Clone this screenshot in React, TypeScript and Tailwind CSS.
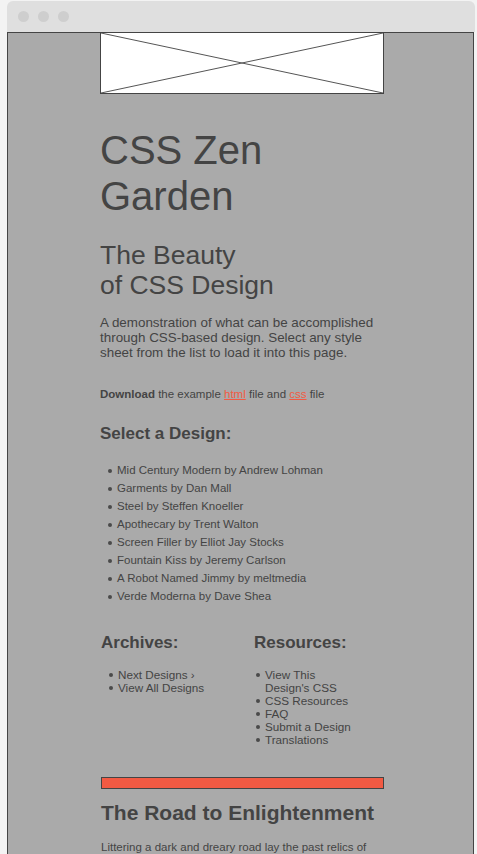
const DESIGNS = [
  "Mid Century Modern by Andrew Lohman",
  "Garments by Dan Mall",
  "Steel by Steffen Knoeller",
  "Apothecary by Trent Walton",
  "Screen Filler by Elliot Jay Stocks",
  "Fountain Kiss by Jeremy Carlson",
  "A Robot Named Jimmy by meltmedia",
  "Verde Moderna by Dave Shea",
];

const ARCHIVES = ["Next Designs ›", "View All Designs"];
const RESOURCES = [
  "View This Design's CSS",
  "CSS Resources",
  "FAQ",
  "Submit a Design",
  "Translations",
];

function Bullet({ top }: { top: string }) {
  return <span className={`shrink-0 w-[4px] h-[4px] rounded-full bg-[#4a4a4a] ${top}`} />;
}

export default function App() {
  return (
    <div
      className="min-h-screen bg-[#f3f3f3] pt-[1px] text-[#444]"
      style={{ fontFamily: '"Liberation Sans", Arial, sans-serif' }}
    >
      <div className="ml-[7px] w-[468px] rounded-t-[6px] bg-[#dfdfdf] h-[31px] flex items-center gap-[9px] pl-[11px]">
        <span className="w-[11px] h-[11px] rounded-full bg-[#cecece]" />
        <span className="w-[11px] h-[11px] rounded-full bg-[#cecece]" />
        <span className="w-[11px] h-[11px] rounded-full bg-[#cecece]" />
      </div>
      <div className="ml-[7px] w-[467px] h-[822px] overflow-hidden border border-b-0 border-[#444] bg-[#aaaaaa]">
        <div className="ml-[92px] w-[284px]">
          {/* header placeholder */}
          <div className="h-[62px] -mt-[1px] border border-[#444] bg-white">
            <svg width="100%" height="100%" viewBox="0 0 282 60" preserveAspectRatio="none">
              <line x1="0" y1="0" x2="282" y2="60" stroke="#555" strokeWidth="1" />
              <line x1="282" y1="0" x2="0" y2="60" stroke="#555" strokeWidth="1" />
            </svg>
          </div>

          <h1 className="mt-[33px] text-[40px] leading-[46px] font-normal w-[200px]">
            CSS Zen Garden
          </h1>
          <h2 className="mt-[21px] text-[26.5px] leading-[30px] font-normal">
            The Beauty
            <br />
            of CSS Design
          </h2>
          <p className="mt-[15px] text-[13.4px] leading-[15px]">
            A demonstration of what can be accomplished through CSS-based design. Select any style
            sheet from the list to load it into this page.
          </p>
          <p className="mt-[27px] text-[11.5px] leading-[14px]">
            <b>Download</b> the example{" "}
            <a className="text-[#f25a43] underline">html</a> file and{" "}
            <a className="text-[#f25a43] underline">css</a> file
          </p>

          <h3 className="mt-[23px] text-[17px] leading-[20px] font-bold">Select a Design:</h3>
          <ul className="mt-[18px] pl-[8px]">
            {DESIGNS.map((d) => (
              <li key={d} className="flex items-center gap-[5px] h-[18px] text-[11.5px]">
                <Bullet top="" />
                <span>{d}</span>
              </li>
            ))}
          </ul>

          <div className="mt-[27px] flex">
            <div className="w-[154px] pl-[1px]">
              <h3 className="text-[17px] leading-[20px] font-bold">Archives:</h3>
              <ul className="mt-[15px] pl-[8px]">
                {ARCHIVES.map((d) => (
                  <li key={d} className="flex items-start gap-[5px] text-[11.7px] leading-[13px]">
                    <Bullet top="mt-[5px]" />
                    <span>{d}</span>
                  </li>
                ))}
              </ul>
            </div>
            <div className="w-[104px]">
              <h3 className="text-[17px] leading-[20px] font-bold">Resources:</h3>
              <ul className="mt-[15px] pl-[2px]">
                {RESOURCES.map((d) => (
                  <li key={d} className="flex items-start gap-[5px] text-[11.7px] leading-[13px]">
                    <Bullet top="mt-[5px]" />
                    <span className="max-w-[88px]">{d}</span>
                  </li>
                ))}
              </ul>
            </div>
          </div>

          <div className="mt-[31px] ml-[1px] h-[12px] border border-[#444] bg-[#f25a43]" />
          <h3 className="mt-[12px] pl-[1px] text-[21px] leading-[24px] font-bold">
            The Road to Enlightenment
          </h3>
          <p className="mt-[14px] pl-[1px] text-[11.5px] leading-[16px] whitespace-nowrap">
            Littering a dark and dreary road lay the past relics of
          </p>
        </div>
      </div>
    </div>
  );
}
